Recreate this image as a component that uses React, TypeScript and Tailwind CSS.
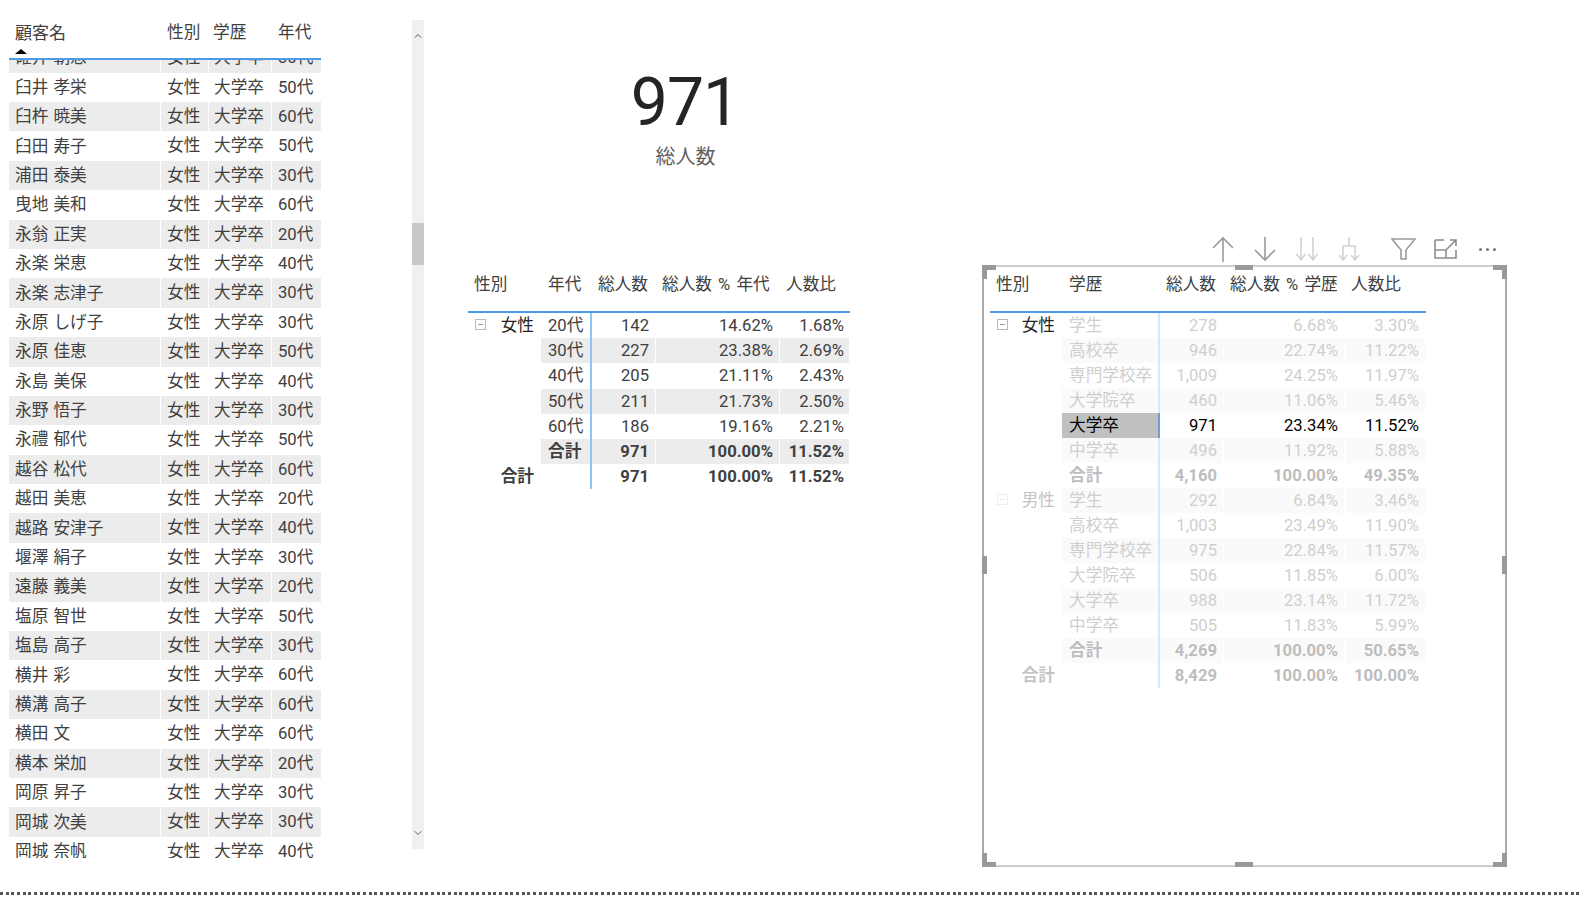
import { ChevronDown, ChevronUp } from "lucide-react";

const font = "font-['Roboto','Noto_Sans_CJK_JP',sans-serif]";

const customers: [string, string][] = [
  ["碓井 朝恵", "30代"],
  ["臼井 孝栄", "50代"],
  ["臼杵 暁美", "60代"],
  ["臼田 寿子", "50代"],
  ["浦田 泰美", "30代"],
  ["曳地 美和", "60代"],
  ["永翁 正実", "20代"],
  ["永楽 栄恵", "40代"],
  ["永楽 志津子", "30代"],
  ["永原 しげ子", "30代"],
  ["永原 佳恵", "50代"],
  ["永島 美保", "40代"],
  ["永野 悟子", "30代"],
  ["永禮 郁代", "50代"],
  ["越谷 松代", "60代"],
  ["越田 美恵", "20代"],
  ["越路 安津子", "40代"],
  ["堰澤 絹子", "30代"],
  ["遠藤 義美", "20代"],
  ["塩原 智世", "50代"],
  ["塩島 高子", "30代"],
  ["横井 彩", "60代"],
  ["横溝 高子", "60代"],
  ["横田 文", "60代"],
  ["横本 栄加", "20代"],
  ["岡原 昇子", "30代"],
  ["岡城 次美", "30代"],
  ["岡城 奈帆", "40代"],
];

interface PivotRow {
  group?: string;
  toggle?: boolean;
  label: string;
  values: string[];
  total?: boolean;
  grand?: boolean;
  selected?: boolean;
  striped?: boolean;
}

const ageRows: PivotRow[] = [
  { group: "女性", toggle: true, label: "20代", values: ["142", "14.62%", "1.68%"] },
  { label: "30代", values: ["227", "23.38%", "2.69%"], striped: true },
  { label: "40代", values: ["205", "21.11%", "2.43%"] },
  { label: "50代", values: ["211", "21.73%", "2.50%"], striped: true },
  { label: "60代", values: ["186", "19.16%", "2.21%"] },
  { label: "合計", values: ["971", "100.00%", "11.52%"], total: true, striped: true },
  { group: "合計", label: "", values: ["971", "100.00%", "11.52%"], grand: true },
];

const eduRows: PivotRow[] = [
  { group: "女性", toggle: true, label: "学生", values: ["278", "6.68%", "3.30%"] },
  { label: "高校卒", values: ["946", "22.74%", "11.22%"], striped: true },
  { label: "専門学校卒", values: ["1,009", "24.25%", "11.97%"] },
  { label: "大学院卒", values: ["460", "11.06%", "5.46%"], striped: true },
  { label: "大学卒", values: ["971", "23.34%", "11.52%"], selected: true },
  { label: "中学卒", values: ["496", "11.92%", "5.88%"], striped: true },
  { label: "合計", values: ["4,160", "100.00%", "49.35%"], total: true },
  { group: "男性", toggle: true, label: "学生", values: ["292", "6.84%", "3.46%"], striped: true },
  { label: "高校卒", values: ["1,003", "23.49%", "11.90%"] },
  { label: "専門学校卒", values: ["975", "22.84%", "11.57%"], striped: true },
  { label: "大学院卒", values: ["506", "11.85%", "6.00%"] },
  { label: "大学卒", values: ["988", "23.14%", "11.72%"], striped: true },
  { label: "中学卒", values: ["505", "11.83%", "5.99%"] },
  { label: "合計", values: ["4,269", "100.00%", "50.65%"], total: true, striped: true },
  { group: "合計", label: "", values: ["8,429", "100.00%", "100.00%"], grand: true },
];

function ToggleBox({ faded }: { faded?: boolean }) {
  return (
    <span
      className={`absolute left-[7px] top-[6px] flex h-[11px] w-[11px] items-center justify-center border ${
        faded ? "border-[#eeeeee]" : "border-[#b8b8b8]"
      }`}
    >
      <span className={`h-px w-[5px] ${faded ? "bg-[#e4e4e4]" : "bg-[#999999]"}`} />
    </span>
  );
}

function CustomerTable() {
  return (
    <div className="w-[312px] shrink-0 text-[16.67px] text-[#404040]">
      <div className="relative flex h-[60px] border-b-2 border-[#4a9be8] pt-[21px] leading-[24px]">
        <div className="w-[151px] pl-[6px] text-[17px]">顧客名</div>
        <div className="w-[48px] pl-[7px]">性別</div>
        <div className="w-[63px] pl-[5px]">学歴</div>
        <div className="w-[50px] pl-[7px]">年代</div>
        <span className="absolute bottom-[4px] left-[6px] h-0 w-0 border-x-[6px] border-b-[5px] border-x-transparent border-b-black" />
      </div>
      <div className="h-[798px] overflow-hidden">
        <div className="-mt-[16.8px]">
          {customers.map(([name, age], i) => (
            <div
              key={name}
              className={`flex h-[29.4px] items-center leading-[29px] ${i % 2 === 0 ? "bg-[#ececec]" : "bg-white"}`}
            >
              <div className="w-[151px] pl-[6px] [word-spacing:1px]">{name}</div>
              <div className="h-full w-[48px] border-l border-white pl-[6px]">女性</div>
              <div className="h-full w-[63px] border-l border-white pl-[5px]">大学卒</div>
              <div className="h-full w-[50px] border-l border-white pl-[6px]">{age}</div>
            </div>
          ))}
        </div>
      </div>
    </div>
  );
}

function Scrollbar() {
  return (
    <div className="ml-[91px] mt-[20px] flex h-[829px] w-[12px] shrink-0 flex-col items-center bg-[#f0f0f0] text-[#606060]">
      <ChevronUp size={12} className="mt-[10px]" />
      <div className="mt-[181px] h-[42px] w-full bg-[#c8c8c8]" />
      <ChevronDown size={12} className="mt-auto mb-[10px]" />
    </div>
  );
}

function KpiCard() {
  return (
    <div className="flex flex-col items-center pl-[53px]">
      <div className="mt-[68px] h-[70px] text-[66px] leading-[70px] tracking-[-1px] text-[#252423]">971</div>
      <div className="ml-[1px] mt-[5px] text-[20px] leading-[28px] text-[#605e5c]">総人数</div>
    </div>
  );
}

function PivotTable({
  headers,
  rows,
  faded,
  groupWidth,
  labelWidth,
  rowHeight,
  valueWidths,
}: {
  headers: string[];
  rows: PivotRow[];
  faded?: boolean;
  groupWidth: string;
  labelWidth: string;
  rowHeight: string;
  valueWidths: string[];
}) {
  const stripe = faded ? "bg-[#fafafa]" : "bg-[#ececec]";
  const line = faded ? "border-[#d6e9fc]" : "border-[#8fc4f7]";

  return (
    <div className="w-fit text-[16.67px] text-[#404040]">
      <div className="flex h-[45px] border-b-2 border-[#4a9be8] pt-[5px] leading-[24px]">
        <div className={`${groupWidth} pl-[6px]`}>{headers[0]}</div>
        <div className={`${labelWidth} pl-[7px]`}>{headers[1]}</div>
        {valueWidths.map((w, i) => (
          <div key={w + i} className={`${w} whitespace-nowrap pl-[6px] [word-spacing:2px]`}>
            {headers[i + 2]}
          </div>
        ))}
      </div>
      {rows.map((row, idx) => {
        const strong = row.total || row.grand;
        const bg = row.selected ? "bg-white" : row.striped ? stripe : "bg-white";
        let tone = "";
        if (faded && !row.selected) tone = strong ? "text-[#bdbdbd]" : "text-[#cfcfcf]";
        if (faded && row.selected) tone = "text-black";
        return (
          <div key={idx} className={`flex ${rowHeight} leading-[25px] ${strong ? "font-bold" : ""}`}>
            <div
              className={`relative ${groupWidth} pr-[7px] text-right ${
                row.group === "女性" ? "text-[#252423]" : faded ? "text-[#c4c4c4]" : ""
              }`}
            >
              {row.toggle && <ToggleBox faded={faded && row.group === "男性"} />}
              {row.group}
            </div>
            <div
              className={`${labelWidth} border-r-2 pl-[7px] ${
                row.selected ? "border-[#6f9fcf] bg-[#c0c0c0]" : `${line} ${row.grand ? "bg-white" : bg}`
              } ${tone}`}
            >
              {row.label}
            </div>
            {row.values.map((v, i) => (
              <div
                key={i}
                className={`${valueWidths[i]} border-r border-white text-right ${
                  i === 2 && !faded ? "pr-[5px]" : "pr-[6px]"
                } ${bg} ${tone}`}
              >
                {v}
              </div>
            ))}
          </div>
        );
      })}
    </div>
  );
}

function ToolIcon({ children }: { children: React.ReactNode }) {
  return (
    <svg width={26} height={26} viewBox="0 0 26 26" fill="none" strokeWidth={1.6}>
      {children}
    </svg>
  );
}

function Toolbar() {
  return (
    <div className="flex h-[32px] items-center justify-end gap-[28px] pr-[7px]">
      <div className="flex items-center gap-[16px]">
        <ToolIcon>
          <path d="M13 2v24M3 12 13 2l10 10" stroke="#9a9a9a" />
        </ToolIcon>
        <ToolIcon>
          <path d="M13 1v23M3 14l10 10 10-10" stroke="#9a9a9a" />
        </ToolIcon>
        <ToolIcon>
          <path d="M7 1v23M2.5 18l4.5 6 4.5-6M19 1v23M14.5 18l4.5 6 4.5-6" stroke="#d2d2d2" />
        </ToolIcon>
        <ToolIcon>
          <path d="M13 1v9M7 24V10h12v14M3 19l4 5 4-5M15 19l4 5 4-5" stroke="#d2d2d2" />
        </ToolIcon>
      </div>
      <div className="flex items-center gap-[16px]">
        <ToolIcon>
          <path d="M2 3h23l-9 11v9h-5v-9L2 3Z" stroke="#9a9a9a" />
        </ToolIcon>
        <ToolIcon>
          <path d="M3 4h9M3 4v18h21v-8M3 14h11v8M14 14 24 4M18 4h6v6" stroke="#8c8c8c" />
        </ToolIcon>
        <span className="flex w-[26px] items-center justify-center gap-[4px]">
          <span className="h-[3px] w-[3px] rounded-full bg-[#777777]" />
          <span className="h-[3px] w-[3px] rounded-full bg-[#777777]" />
          <span className="h-[3px] w-[3px] rounded-full bg-[#777777]" />
        </span>
      </div>
    </div>
  );
}

function FocusFrame() {
  return (
    <div className="relative h-[602px] border-x-2 border-y-2 border-x-[#aaaaaa] border-y-[#cccccc] pl-[6px] pt-[1px]">
      <span className="absolute -left-[2px] -top-[2px] h-[14px] w-[14px] border-l-[5px] border-t-[5px] border-[#999999]" />
      <span className="absolute -right-[2px] -top-[2px] h-[14px] w-[14px] border-r-[5px] border-t-[5px] border-[#999999]" />
      <span className="absolute -bottom-[2px] -left-[2px] h-[14px] w-[14px] border-b-[5px] border-l-[5px] border-[#999999]" />
      <span className="absolute -bottom-[2px] -right-[2px] h-[14px] w-[14px] border-b-[5px] border-r-[5px] border-[#999999]" />
      <span className="absolute -top-[2px] left-[251px] h-[5px] w-[18px] bg-[#999999]" />
      <span className="absolute -bottom-[2px] left-[251px] h-[5px] w-[18px] bg-[#999999]" />
      <span className="absolute -left-[2px] top-[289px] h-[18px] w-[5px] bg-[#999999]" />
      <span className="absolute -right-[2px] top-[289px] h-[18px] w-[5px] bg-[#999999]" />
      <PivotTable
        faded
        headers={["性別", "学歴", "総人数", "総人数 % 学歴", "人数比"]}
        rows={eduRows}
        groupWidth="w-[72px]"
        labelWidth="w-[98px]"
        rowHeight="h-[25px]"
        valueWidths={["w-[64px]", "w-[121px]", "w-[81px]"]}
      />
    </div>
  );
}

export default function App() {
  return (
    <div className={`flex h-[906px] w-[1580px] flex-col overflow-hidden bg-white ${font}`}>
      <div className="flex h-[892px] items-start pl-[9px]">
        <CustomerTable />
        <Scrollbar />
        <div className="ml-[44px] w-[381px] shrink-0">
          <KpiCard />
          <div className="mt-[97px]">
            <PivotTable
              headers={["性別", "年代", "総人数", "総人数 % 年代", "人数比"]}
              rows={ageRows}
              groupWidth="w-[73px]"
              labelWidth="w-[51px]"
              rowHeight="h-[25.2px]"
              valueWidths={["w-[64px]", "w-[124px]", "w-[70px]"]}
            />
          </div>
        </div>
        <div className="ml-[133px] mt-[233px] w-[525px] shrink-0">
          <Toolbar />
          <FocusFrame />
        </div>
      </div>
      <div className="h-[3px] w-full bg-[repeating-linear-gradient(90deg,#555555_0,#555555_3px,transparent_3px,transparent_5.67px)]" />
    </div>
  );
}
